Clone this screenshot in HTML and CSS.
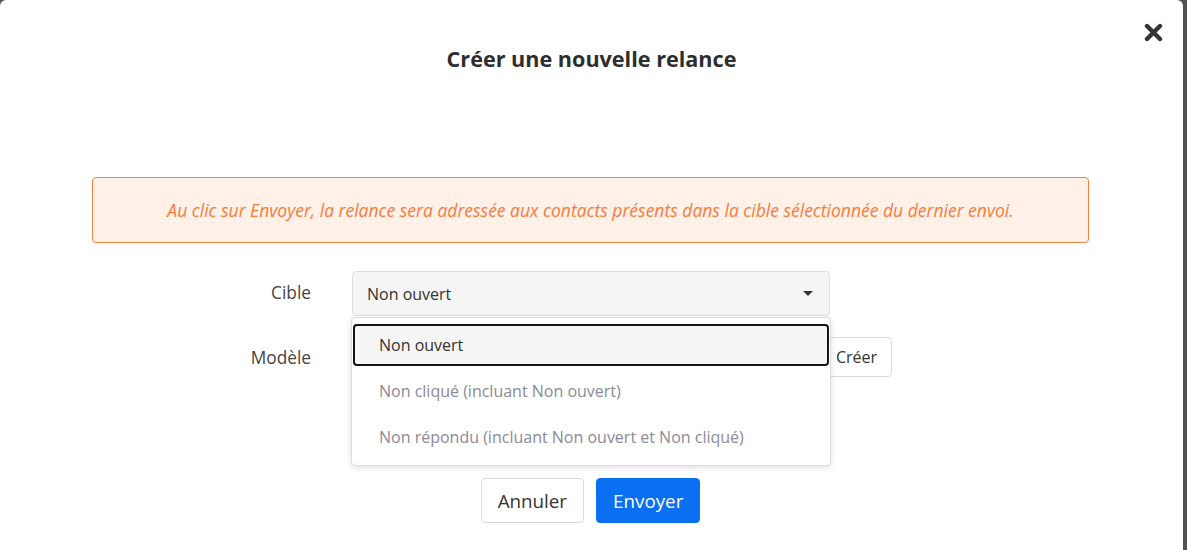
FILE: index.html
```html
<!DOCTYPE html>
<html lang="fr">
<head>
    <meta charset="UTF-8">
    <meta name="viewport" content="width=device-width, initial-scale=1.0">
    <title>Créer une nouvelle relance</title>
    <link rel="stylesheet" href="styles.css">
</head>
<body>
    <div class="modal">
        <div class="modal-header">
            <h2 class="modal-title">Créer une nouvelle relance</h2>
            <button type="button" class="close-btn" aria-label="Fermer">
                <svg width="19" height="19" viewBox="0 0 19 19">
                    <path d="M3 3 L16 16 M16 3 L3 16" stroke="#333" stroke-width="4.4" stroke-linecap="round"/>
                </svg>
            </button>
        </div>

        <div class="modal-body">
            <div class="alert">
                Au clic sur Envoyer, la relance sera adressée aux contacts présents dans la cible sélectionnée du dernier envoi.
            </div>

            <!-- Cible -->
            <div class="form-row">
                <label class="form-label label-target">Cible</label>
                <div class="select-wrap">
                    <div class="select-box">
                        <span>Non ouvert</span>
                        <span class="caret"></span>
                    </div>
                    <ul class="dropdown">
                        <li class="dropdown-item active">Non ouvert</li>
                        <li class="dropdown-item">Non cliqué (incluant Non ouvert)</li>
                        <li class="dropdown-item">Non répondu (incluant Non ouvert et Non cliqué)</li>
                    </ul>
                </div>
            </div>

            <!-- Modèle -->
            <div class="form-row row-model">
                <label class="form-label">Modèle</label>
                <div class="model-field">
                    <div class="select-box small"></div>
                    <button type="button" class="btn btn-light btn-create">
                        <svg width="12" height="12" viewBox="0 0 12 12">
                            <path d="M6 1 V11 M1 6 H11" stroke="#666" stroke-width="1.6"/>
                        </svg>
                        Créer
                    </button>
                </div>
            </div>

            <div class="actions">
                <button type="button" class="btn btn-light">Annuler</button>
                <button type="button" class="btn btn-primary">Envoyer</button>
            </div>
        </div>
    </div>
</body>
</html>
```

FILE: styles.css
```css
body {
    margin: 0;
    background-color: #525252;
    font-family: "Open Sans", Arial, sans-serif;
    color: #333;
    overflow: hidden;
}

.modal {
    position: relative;
    width: 1183px;
    height: 570px;
    background-color: #fff;
    border-radius: 6px;
}

.modal-header {
    box-sizing: border-box;
    height: 177px;
    padding-top: 44px;
    display: flex;
    justify-content: center;
}

.modal-title {
    margin: 0;
    font-size: 21.6px;
    line-height: 30px;
    font-weight: 700;
    color: #2e2e2e;
}

.close-btn {
    position: absolute;
    top: 23px;
    right: 20px;
    padding: 0;
    border: none;
    background: none;
    cursor: pointer;
    line-height: 0;
}

.modal-body {
    padding: 0 94px 0 92px;
}

.alert {
    padding: 20px;
    line-height: 24px;
    font-size: 17.5px;
    font-style: italic;
    text-align: center;
    color: #f57c3c;
    background-color: #fff0e8;
    border: 1px solid #f5803f;
    border-radius: 4px;
}

.form-row {
    display: flex;
    align-items: center;
    margin-top: 28px;
}

.form-label {
    width: 219px;
    margin-right: 41px;
    text-align: right;
    font-size: 17.3px;
    color: #444;
}

.label-target {
    margin-bottom: 3px;
}

.select-wrap {
    position: relative;
    width: 478px;
}

.select-box {
    box-sizing: border-box;
    height: 45px;
    padding: 0 16px 0 14px;
    display: flex;
    align-items: center;
    justify-content: space-between;
    font-size: 16px;
    color: #333;
    background-color: #f5f5f5;
    border: 1px solid #dedede;
    border-radius: 4px;
}

.caret {
    width: 0;
    height: 0;
    border-left: 5px solid transparent;
    border-right: 5px solid transparent;
    border-top: 5px solid #333;
}

.dropdown {
    position: absolute;
    top: 46px;
    left: -1px;
    width: 480px;
    box-sizing: border-box;
    margin: 0;
    padding: 6px 1px 7px;
    list-style: none;
    background-color: #fff;
    border: 1px solid #dcdcdc;
    border-radius: 4px;
    box-shadow: 0 2px 6px rgba(0, 0, 0, 0.12);
    z-index: 5;
}

.dropdown-item {
    box-sizing: border-box;
    height: 42px;
    margin-bottom: 4px;
    padding-left: 24px;
    display: flex;
    align-items: center;
    font-size: 16px;
    color: #8a8a96;
    border: 2px solid transparent;
    border-radius: 4px;
}

.dropdown-item:last-child {
    margin-bottom: 0;
}

.dropdown-item.active {
    color: #333;
    background-color: #f5f5f5;
    border-color: #141414;
}

.row-model {
    margin-top: 21px;
}

.model-field {
    display: flex;
    gap: 10px;
}

.select-box.small {
    width: 430px;
    height: 40px;
}

.btn {
    box-sizing: border-box;
    height: 45px;
    padding: 0 16px;
    font-family: "Open Sans", Arial, sans-serif;
    font-size: 18.8px;
    border-radius: 4px;
    cursor: pointer;
}

.btn-light {
    color: #333;
    background-color: #fff;
    border: 1px solid #dadada;
}

.btn-primary {
    color: #fff;
    background-color: #0b6ff2;
    border: 1px solid #0b6ff2;
}

.btn-create {
    height: 40px;
    width: 100px;
    display: flex;
    align-items: center;
    justify-content: flex-end;
    gap: 6px;
    padding-right: 14px;
    font-size: 16px;
}

.actions {
    display: flex;
    justify-content: center;
    gap: 12px;
    margin-top: 101px;
}
```
